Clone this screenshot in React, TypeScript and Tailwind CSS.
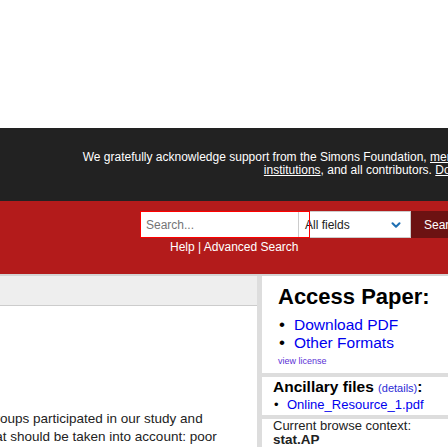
import { ChevronDown } from "lucide-react";

const App = () => {
  return (
    <div className="w-[448px] h-[448px] overflow-hidden bg-white font-['Liberation_Sans',Arial,sans-serif]">
      {/* blank top */}
      <div className="h-[128px]" />

      {/* support banner */}
      <div className="h-[73px] bg-[#222222] pt-[23px]">
        <div className="w-[474px] text-right text-[12px] leading-[13px] text-white whitespace-nowrap">
          <p>
            We gratefully acknowledge support from the Simons Foundation, <span className="underline">member</span>
          </p>
          <p>
            <span className="underline">institutions</span>, and all contributors. <span className="underline">Donate</span>
          </p>
        </div>
      </div>

      {/* search header */}
      <div className="h-[73px] bg-[#b31b1b] pt-[10px]">
        <div className="relative ml-[140px] flex h-[27px] w-[340px]">
          <div className="flex w-[158px] items-center bg-white pl-[6px] text-[12px] text-[#757575]">Search...</div>
          <div className="flex w-[113px] items-center justify-between border border-[#cccccc] bg-white pl-[6px] pr-[7px] text-[12px] text-[#222]">
            <span>All fields</span>
            <ChevronDown className="h-[14px] w-[14px] text-[#1f6fb2]" strokeWidth={3.5} />
          </div>
          <div className="flex flex-1 items-center bg-[#6c1212] pl-[13px] text-[12px] text-white">Search</div>
          <div className="pointer-events-none absolute left-0 top-0 h-[27px] w-[170px] border border-[#ff0000]" />
        </div>
        <div className="ml-[170px] mt-[2px] text-[12px] leading-[14px] text-white">Help | Advanced Search</div>
      </div>
      <div className="h-[2px] bg-[#d4d4d4]" />

      {/* content */}
      <div className="flex">
        <div className="w-[257px] shrink-0">
          <div className="h-[30px] border-b border-[#cccccc] bg-[#eeeeee]" />
          <div className="mt-[104px] whitespace-nowrap text-[13.5px] leading-[18px] text-[#222]">
            <p className="ml-[-12px]">groups participated in our study and</p>
            <p className="ml-[-16px]">that should be taken into account: poor</p>
          </div>
        </div>

        <div className="flex flex-1 flex-col gap-[4px] bg-[#dddddd] pl-[5px]">
          <div className="h-[97px] bg-white pl-[16px] pt-[8px]">
            <h2 className="text-[22px] font-bold leading-[25px] text-black">Access Paper:</h2>
            <ul className="mt-[7px] text-[15.5px] leading-[18px] text-[#0000ee]">
              <li className="flex items-center">
                <span className="w-[16px] pl-[1px] text-[17px] text-black">•</span>Download PDF
              </li>
              <li className="flex items-center">
                <span className="w-[16px] pl-[1px] text-[17px] text-black">•</span>Other Formats
              </li>
            </ul>
            <p className="mt-[3px] text-[9px] leading-[12px] text-[#5b2fd6]">view license</p>
          </div>

          <div className="h-[38px] bg-white pl-[11px] pt-[1px]">
            <h3 className="text-[15.5px] font-bold leading-[18px] text-black">
              Ancillary files <span className="text-[11px] font-normal text-[#2b2bd6]">(details)</span>:
            </h3>
            <div className="flex items-center text-[13px] leading-[16px] text-[#0000ee]">
              <span className="w-[14px] pl-[1px] text-black">•</span>Online_Resource_1.pdf
            </div>
          </div>

          <div className="flex-1 bg-white pl-[11px] text-[13px] leading-[14px] text-[#222]">
            <p>Current browse context:</p>
            <p className="text-[13.5px] font-bold">stat.AP</p>
          </div>
        </div>
      </div>
    </div>
  );
};

export default App;
